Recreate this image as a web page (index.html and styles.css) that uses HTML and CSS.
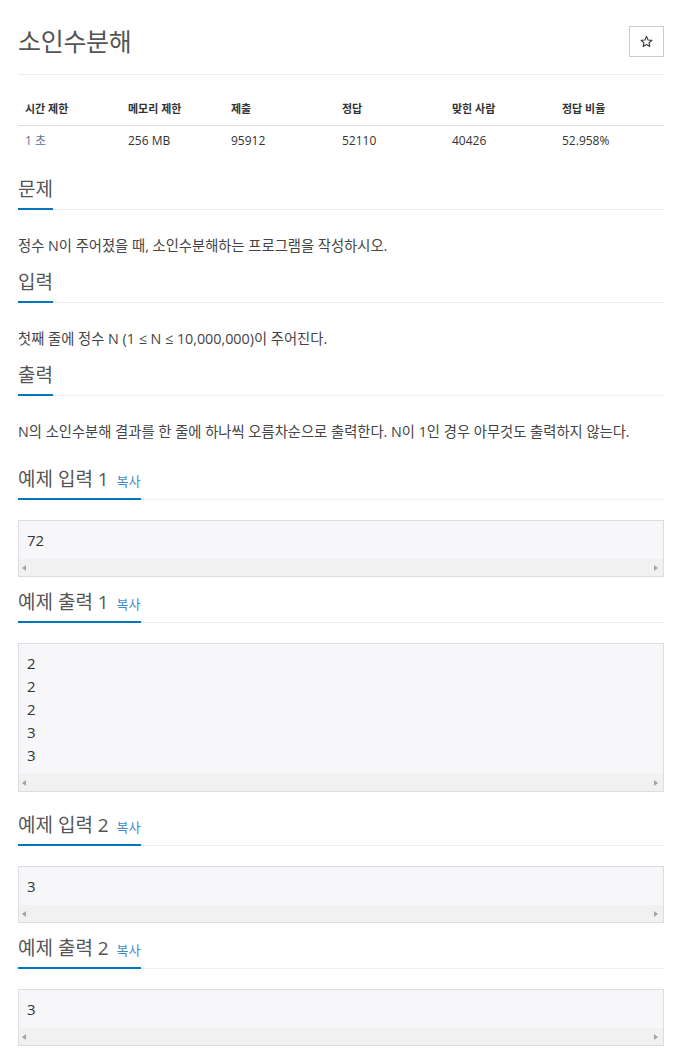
FILE: index.html
```html
<!DOCTYPE html>
<html lang="ko">
<head>
<meta charset="utf-8">
<title>소인수분해</title>
<link rel="stylesheet" href="styles.css">
</head>
<body>
<div class="page">
  <div class="page-header">
    <h1 class="title">소인수분해</h1>
    <button class="star-btn" type="button" aria-label="즐겨찾기">
      <svg width="13" height="13" viewBox="0 0 24 24"><path d="M12 2.5l2.9 6.6 7.1.6-5.4 4.7 1.6 7-6.2-3.7-6.2 3.7 1.6-7L2 9.7l7.1-.6z" fill="none" stroke="#333" stroke-width="2" stroke-linejoin="round"/></svg>
    </button>
  </div>

  <table class="info">
    <thead>
      <tr>
        <th class="c1">시간 제한</th>
        <th class="c2">메모리 제한</th>
        <th class="c3">제출</th>
        <th class="c4">정답</th>
        <th class="c5">맞힌 사람</th>
        <th class="c6">정답 비율</th>
      </tr>
    </thead>
    <tbody>
      <tr>
        <td class="time">1 초</td>
        <td>256 MB</td>
        <td>95912</td>
        <td>52110</td>
        <td>40426</td>
        <td>52.958%</td>
      </tr>
    </tbody>
  </table>

  <section class="sec first">
    <div class="headline"><h2>문제</h2></div>
    <p class="desc">정수 N이 주어졌을 때, 소인수분해하는 프로그램을 작성하시오.</p>
  </section>

  <section class="sec">
    <div class="headline"><h2>입력</h2></div>
    <p class="desc">첫째 줄에 정수 N (1 ≤ N ≤ 10,000,000)이 주어진다.</p>
  </section>

  <section class="sec">
    <div class="headline"><h2>출력</h2></div>
    <p class="desc">N의 소인수분해 결과를 한 줄에 하나씩 오름차순으로 출력한다. N이 1인 경우 아무것도 출력하지 않는다.</p>
  </section>

  <div class="pair pair-first">
    <section class="sample">
      <div class="headline"><h2>예제 입력 1 <span class="copy">복사</span></h2></div>
      <div class="sampledata"><pre>72</pre><div class="hscroll"><span class="arr left"></span><span class="arr right"></span></div></div>
    </section>
    <section class="sample">
      <div class="headline"><h2>예제 출력 1 <span class="copy">복사</span></h2></div>
      <div class="sampledata"><pre>2
2
2
3
3</pre><div class="hscroll"><span class="arr left"></span><span class="arr right"></span></div></div>
    </section>
  </div>

  <div class="pair">
    <section class="sample">
      <div class="headline"><h2>예제 입력 2 <span class="copy">복사</span></h2></div>
      <div class="sampledata"><pre>3</pre><div class="hscroll"><span class="arr left"></span><span class="arr right"></span></div></div>
    </section>
    <section class="sample">
      <div class="headline"><h2>예제 출력 2 <span class="copy">복사</span></h2></div>
      <div class="sampledata"><pre>3</pre><div class="hscroll"><span class="arr left"></span><span class="arr right"></span></div></div>
    </section>
  </div>
</div>
</body>
</html>
```
FILE: styles.css
```css
* { box-sizing: border-box; }

html, body {
  margin: 0;
  padding: 0;
  background: #fff;
}

body {
  font-family: "Open Sans", "Noto Sans CJK KR", sans-serif;
  color: #333;
}

.page {
  padding: 0 18px 20px;
}

.page-header {
  display: flex;
  align-items: center;
  justify-content: space-between;
  padding-top: 26px;
  padding-bottom: 17px;
  border-bottom: 1px solid #eee;
}

.title {
  margin: 0;
  font-size: 25px;
  line-height: 31px;
  font-weight: 400;
  color: #555;
  letter-spacing: -0.3px;
}

.star-btn {
  width: 35px;
  height: 31px;
  margin: 0;
  padding: 0;
  border: 1px solid #ccc;
  background: #fff;
  display: flex;
  align-items: center;
  justify-content: center;
}

.info {
  width: 100%;
  margin-top: 17px;
  border-collapse: collapse;
  font-size: 12px;
  line-height: 18px;
  text-align: left;
}

.info th {
  padding: 8px 7px 7px;
  font-weight: 700;
  color: #333;
  border-bottom: 1px solid #ddd;
  font-size: 11px;
}

.info td {
  padding: 6px 7px 8px;
  color: #333;
}

.info td.time { color: #5a7394; }

.c1 { width: 103px; }
.c2 { width: 103px; }
.c3 { width: 111px; }
.c4 { width: 110px; }
.c5 { width: 110px; }
.c6 { width: 109px; }

.sec { margin-top: 15px; }
.sec.first { margin-top: 20px; }

.headline {
  display: flex;
  border-bottom: 1px dotted #ddd;
}

.headline h2 {
  margin: 0 0 -1px;
  padding-bottom: 8px;
  font-size: 19px;
  line-height: 22px;
  font-weight: 400;
  color: #555;
  border-bottom: 2px solid #0076c0;
}

.copy {
  font-size: 13px;
  line-height: 1;
  color: #428bca;
  margin-left: 3px;
}

.desc {
  margin: 26px 0 0;
  font-size: 14.3px;
  line-height: 20px;
  color: #444;
}

.pair { margin-top: 22px; }
.pair-first { margin-top: 26px; }

.sample + .sample { margin-top: 14px; }

.sampledata {
  margin-top: 20px;
  border: 1px solid #dcdce2;
  background: #f7f7f9;
}

.sampledata pre {
  margin: 0;
  padding: 7.5px 8px;
  font-family: "Open Sans", "Noto Sans CJK KR", sans-serif;
  font-size: 15px;
  line-height: 23px;
  color: #333;
}

.hscroll {
  height: 17px;
  background: #f1f1f1;
  display: flex;
  align-items: center;
  justify-content: space-between;
  padding: 0 5px 0 3px;
}

.arr {
  width: 0;
  height: 0;
  border-top: 3.5px solid transparent;
  border-bottom: 3.5px solid transparent;
}

.arr.left { border-right: 4px solid #a3a3a3; }
.arr.right { border-left: 4px solid #a3a3a3; }
```
